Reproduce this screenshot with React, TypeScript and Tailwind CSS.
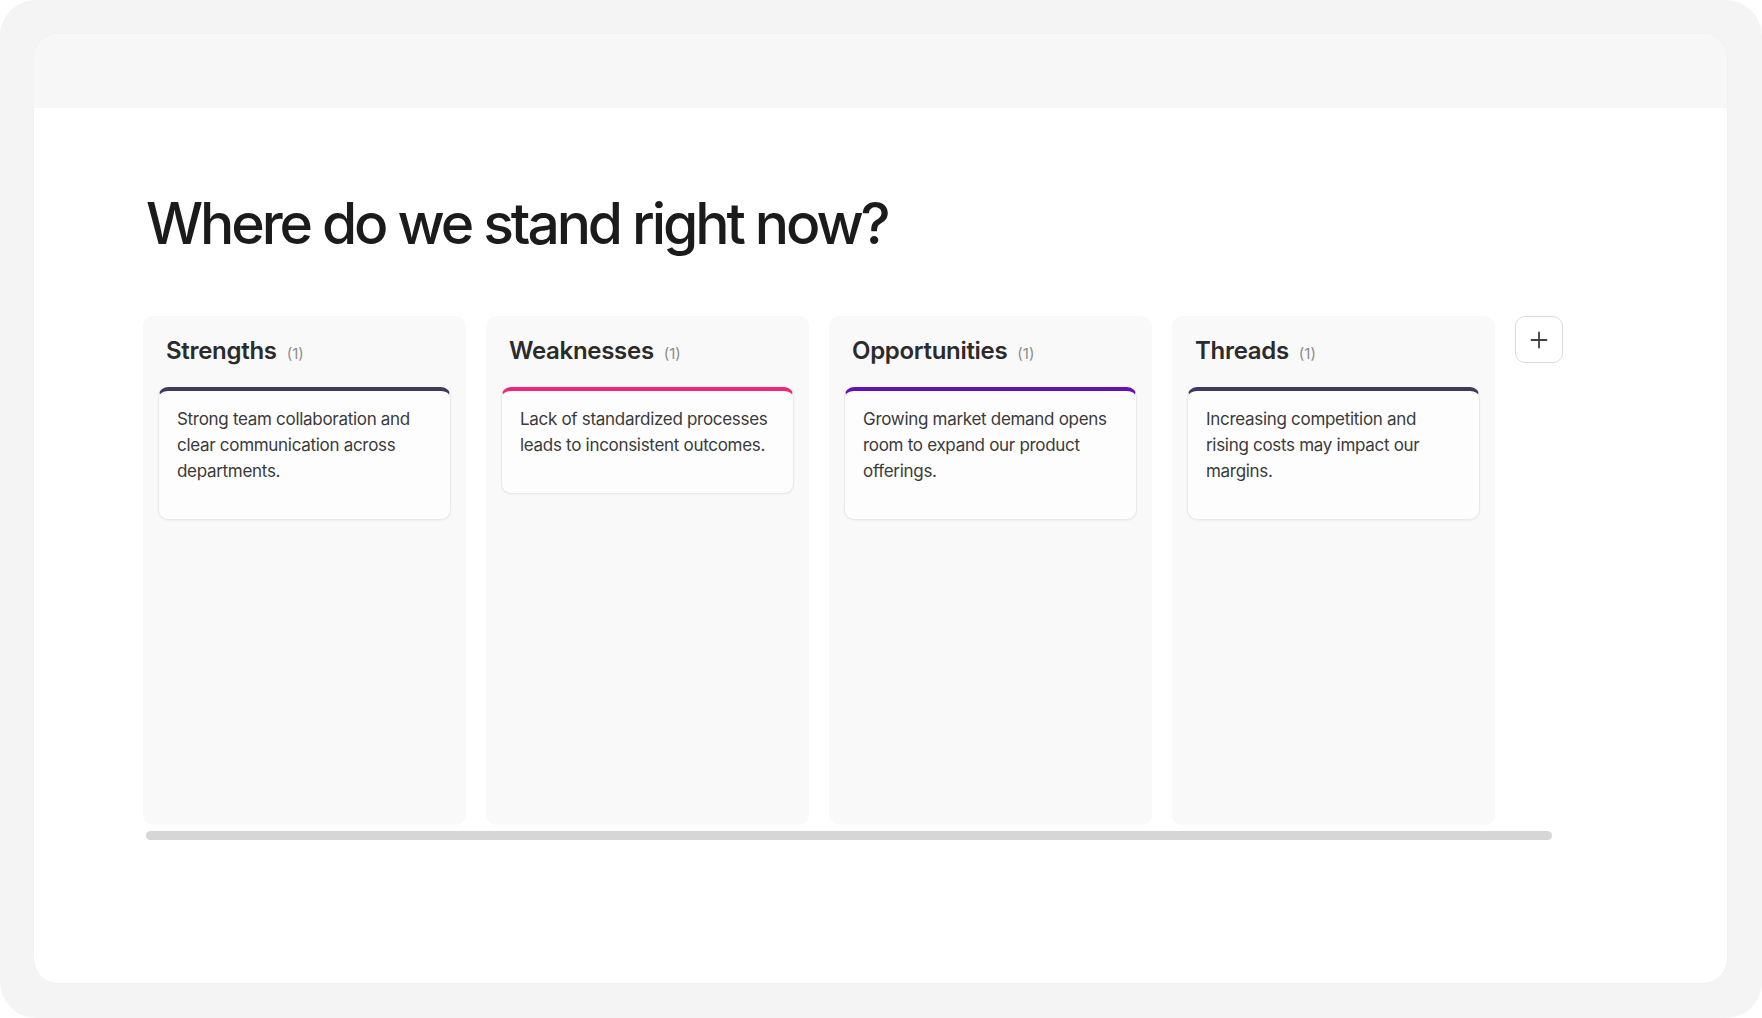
import React from 'react'

interface Column {
  title: string
  accent: string
  text: string
}

const columns: Column[] = [
  {
    title: 'Strengths',
    accent: 'border-t-[#3d3b5e]',
    text: 'Strong team collaboration and clear communication across departments.',
  },
  {
    title: 'Weaknesses',
    accent: 'border-t-[#f2257a]',
    text: 'Lack of standardized processes leads to inconsistent outcomes.',
  },
  {
    title: 'Opportunities',
    accent: 'border-t-[#6312b3]',
    text: 'Growing market demand opens room to expand our product offerings.',
  },
  {
    title: 'Threads',
    accent: 'border-t-[#3d3b5e]',
    text: 'Increasing competition and rising costs may impact our margins.',
  },
]

function SwotColumn({ col }: { col: Column }) {
  return (
    <div className="h-[509px] w-[323px] shrink-0 rounded-[10px] bg-[#f9f9f9] px-[15px]">
      <div className="mt-[19px] flex h-[32px] items-baseline gap-[10px] pl-[8px]">
        <h2 className="text-[24px] font-semibold leading-[32px] tracking-[-0.3px] text-[#2b2b2b]">
          {col.title}
        </h2>
        <span className="text-[15px] text-[#8c8c8c]">(1)</span>
      </div>
      <div
        className={`mt-[20px] rounded-[10px] border border-[#e9e9e9] border-t-4 ${col.accent} bg-[#fdfdfd] pb-[35px] pl-[18px] pr-[20px] pt-[15px] shadow-[0_1px_2px_rgba(0,0,0,0.04)]`}
      >
        <p className="text-[17px] leading-[26px] tracking-[-0.3px] text-[#3a3a3a]">{col.text}</p>
      </div>
    </div>
  )
}

export default function App() {
  return (
    <div className="h-[1018px] w-[1762px] bg-white" style={{ fontFamily: 'Inter, "Noto Sans", sans-serif' }}>
      <div className="h-full rounded-[36px] bg-[#f4f4f4] p-[34px] pr-[35px] pb-[35px]">
        <div className="flex h-full flex-col overflow-hidden rounded-[24px] bg-white shadow-[0_0_2px_rgba(0,0,0,0.05)]">
          <div className="h-[74px] shrink-0 bg-[#f7f7f7]" />

          <div className="pl-[109px] pt-[87px]">
            <h1 className="ml-[3px] text-[57px] font-medium leading-none tracking-[-3.1px] text-[#1b1b1b]">
              Where do we stand right now?
            </h1>

            {/* SWOT board */}
            <div className="mt-[64px] flex gap-[20px]">
              {columns.map((col) => (
                <SwotColumn key={col.title} col={col} />
              ))}
              <button className="flex h-[47px] w-[48px] shrink-0 items-center justify-center rounded-[10px] border border-[#dcdcdc] bg-white">
                <svg width="20" height="20" viewBox="0 0 20 20" fill="none" stroke="#3f3f3f" strokeWidth="1.8" strokeLinecap="round">
                  <path d="M10 2.5v15M2.5 10h15" />
                </svg>
              </button>
            </div>

            {/* horizontal scrollbar */}
            <div className="ml-[3px] mt-[6px] h-[9px] w-[1406px] rounded-full bg-[#d6d6d6]" />
          </div>
        </div>
      </div>
    </div>
  )
}
